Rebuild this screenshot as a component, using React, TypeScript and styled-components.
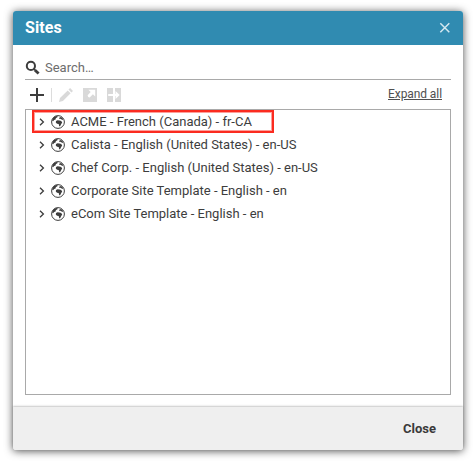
import React from "react";
import styled, { createGlobalStyle } from "styled-components";

const GlobalStyle = createGlobalStyle`
  * { box-sizing: border-box; }
  body {
    margin: 0;
    background: #fff;
    font-family: Roboto, "Liberation Sans", sans-serif;
    font-size: 13px;
    color: #3d3d3d;
  }
`;

const Page = styled.main`
  height: 462px;
  padding: 11px 13px 12px;
  overflow: hidden;
`;

const Dialog = styled.section`
  height: 439px;
  display: flex;
  flex-direction: column;
  background: #fff;
  border-radius: 3px;
  box-shadow: 0 1px 8px rgba(0, 0, 0, 0.7);
`;

const Header = styled.header`
  height: 34px;
  flex: none;
  display: flex;
  align-items: center;
  justify-content: space-between;
  padding: 0 12px;
  background: #308bb1;
  border-radius: 3px 3px 0 0;
`;

const Title = styled.h1`
  margin: 0;
  font-size: 16px;
  line-height: 34px;
  font-weight: 700;
  letter-spacing: 0.1px;
  color: #fff;
`;

const IconButton = styled.button<{ $width: number }>`
  display: flex;
  width: ${(p) => p.$width}px;
  padding: 0;
  border: 0;
  background: none;
`;

const Body = styled.div`
  flex: 1;
  display: flex;
  flex-direction: column;
  padding: 10px 12px;
`;

const SearchBar = styled.label`
  height: 25px;
  flex: none;
  display: flex;
  align-items: center;
  gap: 5px;
  border-bottom: 1px solid #a9a9a9;
`;

const SearchText = styled.span`
  padding-top: 2px;
  font-size: 13px;
  line-height: 22px;
  color: #6d6d6d;
`;

const Toolbar = styled.div`
  height: 29px;
  flex: none;
  display: flex;
  align-items: center;
  padding: 1px 9px 0 5px;
`;

const Tools = styled.div`
  display: flex;
  align-items: center;
  gap: 10px;
  flex: 1;
`;

const Divider = styled.span`
  width: 1px;
  height: 14px;
  margin: 0 -3px 0 -3px;
  background: #dcdcdc;
`;

const ExpandLink = styled.a`
  font-size: 12px;
  line-height: 14px;
  letter-spacing: -0.08px;
  padding-bottom: 2px;
  color: #505050;
  text-decoration: underline;
`;

const Tree = styled.ul`
  flex: 1;
  margin: 0 0 1px;
  padding: 0 6px;
  list-style: none;
  border: 1px solid #a9a9a9;
`;

const TreeRow = styled.li`
  position: relative;
  height: 23px;
  display: flex;
  align-items: center;
  padding-left: 7px;
`;

const Highlight = styled.span`
  position: absolute;
  left: 0;
  top: 0;
  width: 242px;
  height: 23px;
  border: 2px solid #fb2b20;
  box-shadow: inset 0 0 0 1px rgba(251, 43, 32, 0.45);
`;

const Label = styled.span`
  margin-left: 6px;
  line-height: 23px;
  white-space: nowrap;
`;

const Arrow = styled.svg`
  width: 6px;
  height: 8px;
  margin-right: 6px;
`;

const Footer = styled.footer`
  height: 43px;
  margin-top: 1px;
  flex: none;
  display: flex;
  align-items: center;
  justify-content: flex-end;
  padding-right: 27px;
  background: #efefef;
  border-radius: 0 0 3px 3px;
  box-shadow: 0 -1px 2px rgba(0, 0, 0, 0.22);
`;

const CloseButton = styled.button`
  padding: 1px 0 0;
  border: 0;
  background: none;
  font: 700 13px/20px Roboto, "Liberation Sans", sans-serif;
  color: #3a3a3a;
`;

const Globe = () => (
  <svg width="14" height="14" viewBox="0 0 14 14">
    <circle cx="7" cy="7" r="6.4" fill="#fff" stroke="#3d3d3d" strokeWidth="1" />
    <path
      fill="#3d3d3d"
      d="M1 5.2 2.6 2.2 5.2.9 6.8 1.2 6.2 2.4 4.9 3.1 4.6 4.5 3.2 5.1 2.1 6.3ZM8.4 2.4 10 1.9 11.8 3.4 12.3 4.9 10.6 4.6 9.5 3.8 8.2 3.9ZM5 6 6.5 5.2 8.6 5.5 10.2 6 11.2 7.5 10.1 9.2 9.1 11.2 8.2 11.3 7.7 9.1 6 8.7 4.8 7.6Z"
    />
  </svg>
);

const sites = [
  { name: "ACME - French (Canada) - fr-CA", highlighted: true },
  { name: "Calista - English (United States) - en-US" },
  { name: "Chef Corp. - English (United States) - en-US" },
  { name: "Corporate Site Template - English - en" },
  { name: "eCom Site Template - English - en" },
];

export default function App() {
  return (
    <Page>
      <GlobalStyle />
      <Dialog role="dialog" aria-label="Sites">
        <Header>
          <Title>Sites</Title>
          <IconButton $width={12} aria-label="Dismiss">
            <svg width="12" height="12" viewBox="0 0 12 12">
              <path d="M1.3 1.3 10.3 10.3M10.3 1.3 1.3 10.3" stroke="#d3e8f0" strokeWidth="1.5" />
            </svg>
          </IconButton>
        </Header>
        <Body>
          <SearchBar>
            <svg width="15" height="15" viewBox="0 0 15 15" fill="none" stroke="#3d3d3d">
              <circle cx="5.9" cy="5.9" r="4.1" strokeWidth="2" />
              <path d="m8.7 8.8 1.2 1.2" strokeWidth="1.8" />
              <path d="m9.8 10 3.8 3.6" strokeWidth="2.8" />
            </svg>
            <SearchText>Search…</SearchText>
          </SearchBar>
          <Toolbar>
            <Tools>
              <IconButton $width={14} aria-label="Add">
                <svg width="14" height="14" viewBox="0 0 14 14">
                  <path d="M7 0v14M0 7h14" stroke="#3d3d3d" strokeWidth="2" />
                </svg>
              </IconButton>
              <Divider />
              <IconButton $width={14} aria-label="Edit">
                <svg width="14" height="14" viewBox="0 0 14 14" fill="#d9d9d9">
                  <path d="M0 14 1 10.1 8.7 2.4 11.6 5.3 3.9 13ZM9.5 1.6 11.1 0 14 2.9 12.4 4.5Z" />
                </svg>
              </IconButton>
              <IconButton $width={14} aria-label="Open">
                <svg width="14" height="14" viewBox="0 0 14 14">
                  <path fill="#d9d9d9" d="M0 0h14v14H0Z" />
                  <path fill="#fff" d="M5.4 1.7h6.8v6.8L9.9 6.2 6.7 9.4 5.2 8.9 4.6 7.2 7.7 4Z" />
                </svg>
              </IconButton>
              <IconButton $width={14} aria-label="Move">
                <svg width="14" height="14" viewBox="0 0 14 14">
                  <path fill="#d9d9d9" d="M0 0h6v14H0ZM8 0h6v14H8Z" />
                  <path fill="#fff" d="M1.2 6h7.3V3L12.7 7l-4.2 4V8H1.2Z" />
                </svg>
              </IconButton>
            </Tools>
            <ExpandLink>Expand all</ExpandLink>
          </Toolbar>
          <Tree>
            {sites.map((site) => (
              <TreeRow key={site.name}>
                <Arrow viewBox="0 0 6 8">
                  <path d="m1 .8 3.4 3.2L1 7.2" fill="none" stroke="#3d3d3d" strokeWidth="1.3" />
                </Arrow>
                <Globe />
                <Label>{site.name}</Label>
                {site.highlighted && <Highlight />}
              </TreeRow>
            ))}
          </Tree>
        </Body>
        <Footer>
          <CloseButton>Close</CloseButton>
        </Footer>
      </Dialog>
    </Page>
  );
}
